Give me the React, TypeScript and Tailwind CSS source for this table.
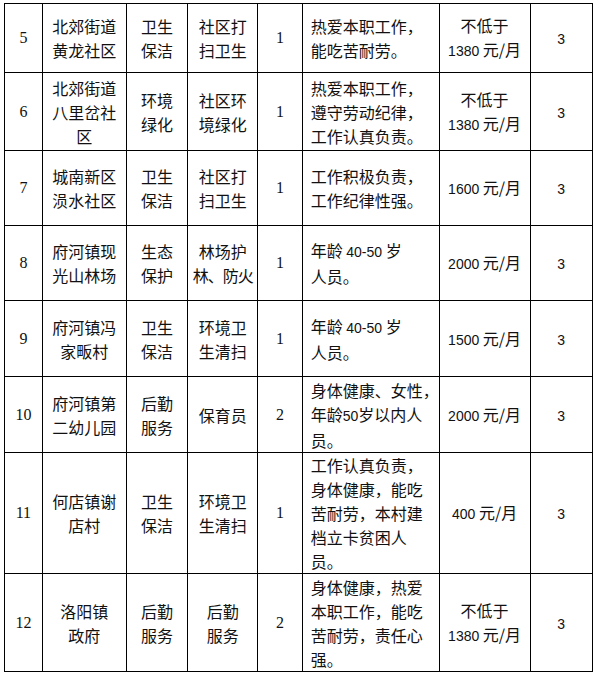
const cjk = '"Noto Sans CJK SC", sans-serif';

type Row = {
  no: string;
  unit: string[];
  type: string[];
  post: React.ReactNode[];
  count: string;
  req: React.ReactNode[];
  pay: React.ReactNode[];
  h: string;
};

function N({ children }: { children: React.ReactNode }) {
  return <span className="font-['Liberation_Sans'] text-[14px]">{children}</span>;
}

const rows: Row[] = [
  {
    no: "5",
    unit: ["北郊街道", "黄龙社区"],
    type: ["卫生", "保洁"],
    post: ["社区打", "扫卫生"],
    count: "1",
    req: ["热爱本职工作，", "能吃苦耐劳。"],
    pay: ["不低于", <><N>1380</N> 元/月</>],
    h: "h-[69px]",
  },
  {
    no: "6",
    unit: ["北郊街道", "八里岔社", "区"],
    type: ["环境", "绿化"],
    post: ["社区环", "境绿化"],
    count: "1",
    req: ["热爱本职工作，", "遵守劳动纪律，", "工作认真负责。"],
    pay: ["不低于", <><N>1380</N> 元/月</>],
    h: "h-[78px]",
  },
  {
    no: "7",
    unit: ["城南新区", "涢水社区"],
    type: ["卫生", "保洁"],
    post: ["社区打", "扫卫生"],
    count: "1",
    req: ["工作积极负责，", "工作纪律性强。"],
    pay: [<><N>1600</N> 元/月</>],
    h: "h-[75px]",
  },
  {
    no: "8",
    unit: ["府河镇现", "光山林场"],
    type: ["生态", "保护"],
    post: ["林场护", <span className="tracking-[-1px]">林、防火</span>],
    count: "1",
    req: [<>年龄 <N>40-50</N> 岁</>, "人员。"],
    pay: [<><N>2000</N> 元/月</>],
    h: "h-[75px]",
  },
  {
    no: "9",
    unit: ["府河镇冯", "家畈村"],
    type: ["卫生", "保洁"],
    post: ["环境卫", "生清扫"],
    count: "1",
    req: [<>年龄 <N>40-50</N> 岁</>, "人员。"],
    pay: [<><N>1500</N> 元/月</>],
    h: "h-[76px]",
  },
  {
    no: "10",
    unit: ["府河镇第", "二幼儿园"],
    type: ["后勤", "服务"],
    post: ["保育员"],
    count: "2",
    req: ["身体健康、女性，", <>年龄<N>50</N>岁以内人</>, "员。"],
    pay: [<><N>2000</N> 元/月</>],
    h: "h-[76px]",
  },
  {
    no: "11",
    unit: ["何店镇谢", "店村"],
    type: ["卫生", "保洁"],
    post: ["环境卫", "生清扫"],
    count: "1",
    req: ["工作认真负责，", "身体健康，能吃", "苦耐劳，本村建", "档立卡贫困人", "员。"],
    pay: [<><N>400</N> 元/月</>],
    h: "h-[120px]",
  },
  {
    no: "12",
    unit: ["洛阳镇", "政府"],
    type: ["后勤", "服务"],
    post: ["后勤", "服务"],
    count: "2",
    req: ["身体健康，热爱", "本职工作，能吃", "苦耐劳，责任心", "强。"],
    pay: ["不低于", <><N>1380</N> 元/月</>],
    h: "h-[98px]",
  },
];

function Lines({ items }: { items: React.ReactNode[] }) {
  return (
    <>
      {items.map((t, i) => (
        <div key={i} className="whitespace-nowrap">
          {t}
        </div>
      ))}
    </>
  );
}

const td = "border border-black p-0 align-middle";

export default function App() {
  return (
    <div className="bg-white min-h-screen pl-[4px] pt-[3px]">
      <table
        className="table-fixed border-collapse text-[#111] text-[16px] leading-[24px]"
        style={{ fontFamily: cjk }}
      >
        <colgroup>
          <col className="w-[38px]" />
          <col className="w-[84px]" />
          <col className="w-[62px]" />
          <col className="w-[70px]" />
          <col className="w-[45px]" />
          <col className="w-[131px]" />
          <col className="w-[91px]" />
          <col className="w-[63px]" />
        </colgroup>
        <tbody>
          {rows.map((r) => (
            <tr key={r.no} className={r.h}>
              <td className={`${td} text-center font-['Liberation_Serif']`}>{r.no}</td>
              <td className={`${td} text-center`}>
                <Lines items={r.unit} />
              </td>
              <td className={`${td} text-center`}>
                <Lines items={r.type} />
              </td>
              <td className={`${td} text-center`}>
                <Lines items={r.post} />
              </td>
              <td className={`${td} text-center font-['Liberation_Serif']`}>{r.count}</td>
              <td className={`${td} pl-[8px] text-left`}>
                <Lines items={r.req} />
              </td>
              <td className={`${td} text-center`}>
                <Lines items={r.pay} />
              </td>
              <td className={`${td} text-center`}>
                <N>3</N>
              </td>
            </tr>
          ))}
        </tbody>
      </table>
    </div>
  );
}
